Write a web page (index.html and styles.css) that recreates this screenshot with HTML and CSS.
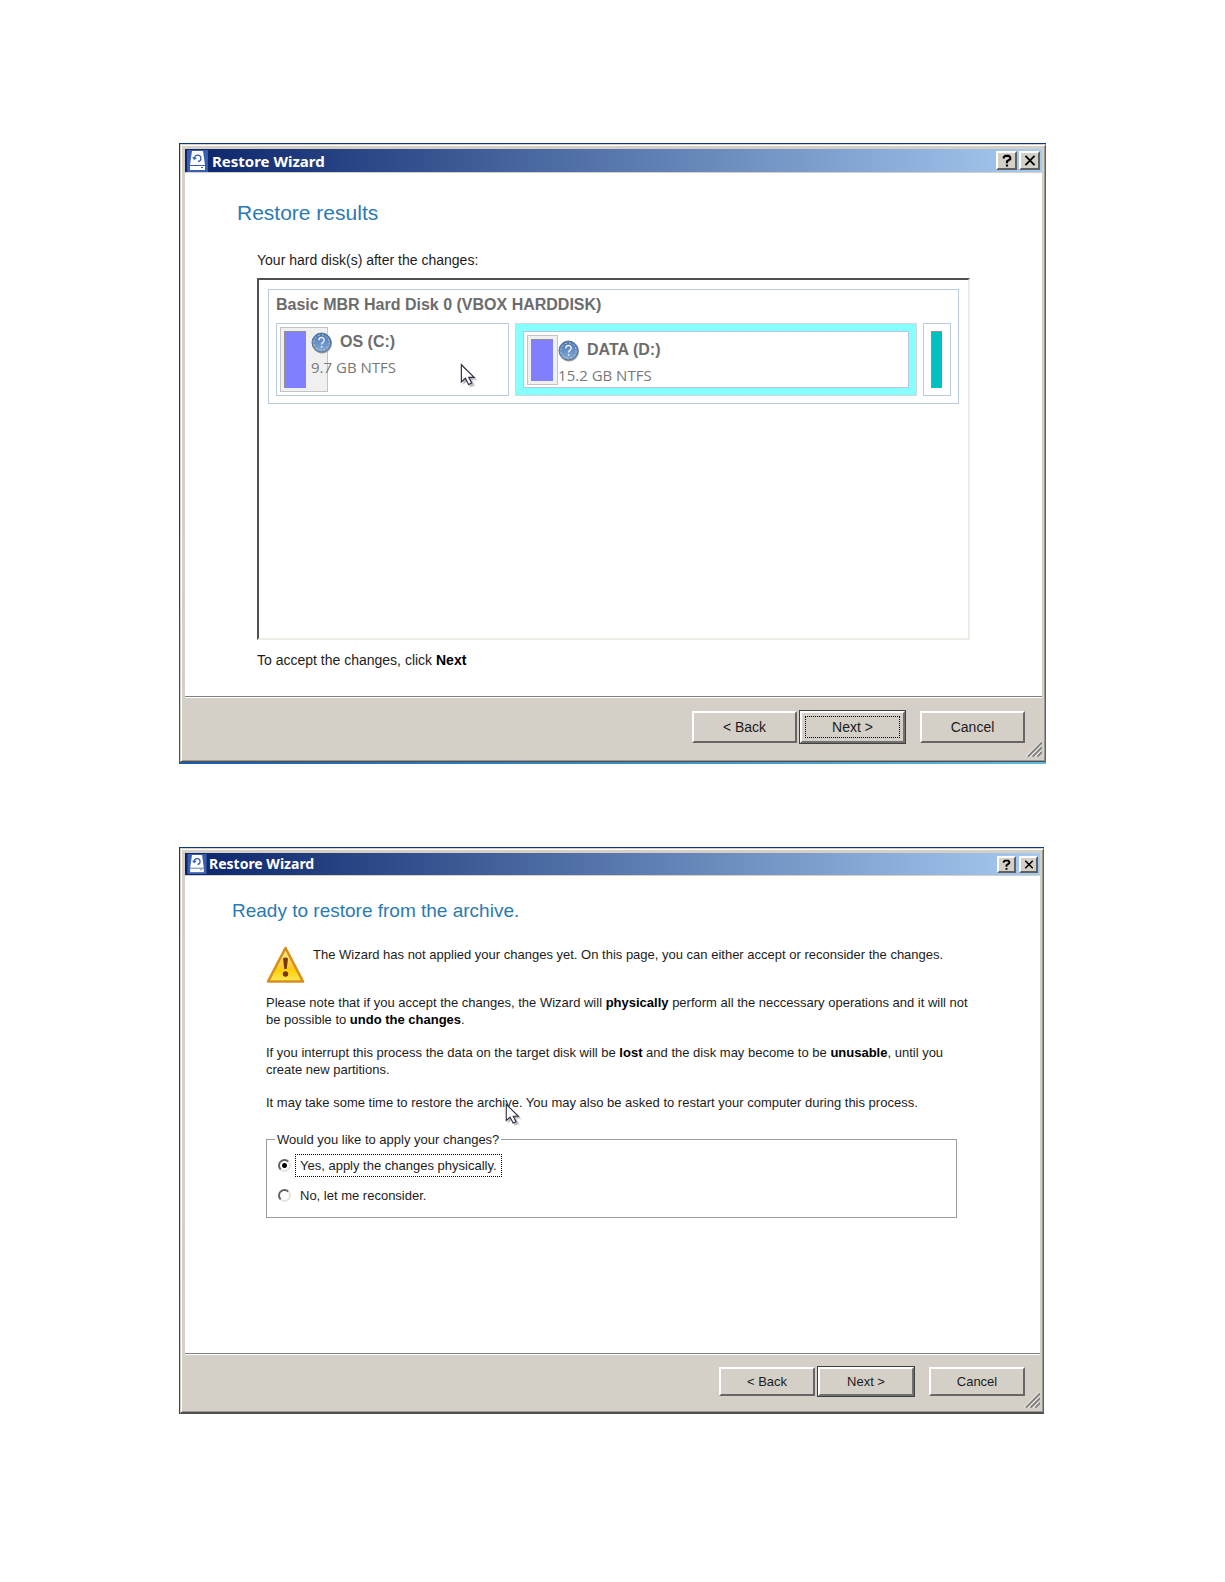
FILE: index.html
```html
<!DOCTYPE html>
<html lang="en">
<head>
<meta charset="utf-8">
<title>Restore Wizard</title>
<link rel="stylesheet" href="styles.css">
</head>
<body>
<svg class="defs" aria-hidden="true">
  <defs>
    <linearGradient id="ball" x1="0" y1="0" x2="0" y2="1"><stop offset="0" stop-color="#4a74b4"/><stop offset="1" stop-color="#86abd8"/></linearGradient>
    <linearGradient id="amber" x1="0" y1="0" x2="0" y2="1"><stop offset="0" stop-color="#fff0a0"/><stop offset=".6" stop-color="#ffc928"/><stop offset=".65" stop-color="#fbd003"/><stop offset="1" stop-color="#ffe85c"/></linearGradient>
  </defs>
  <symbol id="drive" viewBox="0 0 21 22">
    <path fill="#3a5fae" d="M0 0h21v22H0z"/>
    <path fill="#fff" d="M5 1h11l2 14H3z"/>
    <path fill="#fff" d="M3 16h15v4H3z"/>
    <path fill="#3a5fae" d="M14 17h2v1h-2z"/>
    <path fill="none" stroke="#3a5fae" stroke-width="1.3" d="M7.500 8.500a3.200 3.200 0 1 1 3.500 3M5.800 7.200l1.600 2 2-1.400"/>
  </symbol>
  <symbol id="help" viewBox="0 0 22 22">
    <circle cx="11" cy="11.5" r="10" fill="#9c9c9c"/>
    <circle cx="10.5" cy="10.5" r="9.5" fill="url(#ball)" stroke="#5573a0"/>
    <circle cx="10.5" cy="10.5" r="7.6" fill="none" stroke="#b9c9b4" stroke-dasharray="2 2"/>
    <path d="M7.800 8.200c.2-3.600 5.600-3.400 5.400 0-.1 1.900-2.600 2-2.600 4.200M10.600 14v1.800" fill="none" stroke="#e8eef8" stroke-width="1.500"/>
  </symbol>
  <symbol id="pointer" viewBox="0 0 20 28">
    <path fill="#999" opacity=".35" d="M3 3v21l5-4 3 7 6-2-3-6h6z"/>
    <path fill="#999" opacity=".5" d="M4 4v19l4.500-4 3 7 4-2-3-6.500h6z"/>
    <path fill="#fff" stroke="#2d2d44" stroke-width="1.300" d="M1.500 1.500v19l4.500-4 3.500 7 3.500-1.700-3.300-6.300h6z"/>
  </symbol>
  <symbol id="grip" viewBox="0 0 17 17">
    <path fill="none" stroke="#fff" d="M0 16 16 0M5 16 16 5M10 16l6-6"/>
    <path fill="none" stroke="#808080" stroke-width="2" d="M2 16 17 1M7 16 17 6M12 16l5-5"/>
  </symbol>
  <symbol id="question" viewBox="0 0 11 14">
    <path fill="none" stroke="#000" stroke-width="2.400" d="M2 4.800V3.500L3.500 2h4L9 3.500v2L5.500 8v2M5.500 11.300v2.400"/>
  </symbol>
  <symbol id="cross" viewBox="0 0 12 12">
    <path fill="none" stroke="#000" stroke-width="2" d="m1 1 10 10M11 1 1 11"/>
  </symbol>
</svg>

<main class="page">
  <section class="window" aria-label="Restore results">
    <div class="frame">
      <header class="titlebar">
        <svg class="app-icon"><use href="#drive"/></svg>
        <span class="caption">Restore Wizard</span>
        <button class="tool" aria-label="Help"><svg class="q"><use href="#question"/></svg></button>
        <button class="tool" aria-label="Close"><svg class="x"><use href="#cross"/></svg></button>
      </header>
      <div class="body results">
        <h1>Restore results</h1>
        <div class="content">
          <p class="intro">Your hard disk(s) after the changes:</p>
          <div class="disk-list">
            <div class="disk">
              <h2>Basic MBR Hard Disk 0 (VBOX HARDDISK)</h2>
              <div class="partitions">
                <div class="partition part-c">
                  <div class="gauge"><span class="fill"></span></div>
                  <div class="info">
                    <div class="name"><svg class="help"><use href="#help"/></svg><b>OS (C:)</b></div>
                    <div class="size">9.7 GB NTFS</div>
                  </div>
                  <svg class="pointer"><use href="#pointer"/></svg>
                </div>
                <div class="partition part-d">
                  <div class="inner">
                    <div class="gauge"><span class="fill"></span></div>
                    <div class="info">
                      <div class="name"><svg class="help"><use href="#help"/></svg><b>DATA (D:)</b></div>
                      <div class="size">15.2 GB NTFS</div>
                    </div>
                  </div>
                </div>
                <div class="partition part-free"><span class="free"></span></div>
              </div>
            </div>
          </div>
          <p class="hint">To accept the changes, click <strong>Next</strong></p>
        </div>
      </div>
      <footer class="actions">
        <button class="btn">&lt; Back</button>
        <button class="btn default focused"><span>Next &gt;</span></button>
        <button class="btn cancel">Cancel</button>
        <svg class="grip"><use href="#grip"/></svg>
      </footer>
    </div>
  </section>

  <section class="window compact" aria-label="Ready to restore">
    <div class="frame">
      <header class="titlebar">
        <svg class="app-icon"><use href="#drive"/></svg>
        <span class="caption">Restore Wizard</span>
        <button class="tool" aria-label="Help"><svg class="q"><use href="#question"/></svg></button>
        <button class="tool" aria-label="Close"><svg class="x"><use href="#cross"/></svg></button>
      </header>
      <div class="body ready">
        <h1>Ready to restore from the archive.</h1>
        <div class="content">
          <div class="notice">
            <svg class="warning" viewBox="0 0 39 38">
              <path d="M19.500 2 37 35.500H2z" fill="url(#amber)" stroke="#d98e1c" stroke-width="2.600" stroke-linejoin="round"/>
              <path d="M17 12.500q2.500-2 5 0L20.700 23h-2.400z" fill="#7a3606"/>
              <circle cx="19.500" cy="28" r="2.700" fill="#7a3606"/>
            </svg>
            <p>The Wizard has not applied your changes yet. On this page, you can either accept or reconsider the changes.</p>
          </div>
          <p>Please note that if you accept the changes, the Wizard will <strong>physically</strong> perform all the neccessary operations and it will not be possible to <strong>undo the changes</strong>.</p>
          <p>If you interrupt this process the data on the target disk will be <strong>lost</strong> and the disk may become to be <strong>unusable</strong>, until you create new partitions.</p>
          <p class="last">It may take some time to restore the archive. You may also be asked to restart your computer during this process.<svg class="pointer"><use href="#pointer"/></svg></p>
          <fieldset>
            <legend>Would you like to apply your changes?</legend>
            <div class="option"><input type="radio" name="apply" id="apply-yes" checked><label class="focus" for="apply-yes">Yes, apply the changes physically.</label></div>
            <div class="option"><input type="radio" name="apply" id="apply-no"><label for="apply-no">No, let me reconsider.</label></div>
          </fieldset>
        </div>
      </div>
      <footer class="actions">
        <button class="btn">&lt; Back</button>
        <button class="btn default">Next &gt;</button>
        <button class="btn cancel">Cancel</button>
        <svg class="grip"><use href="#grip"/></svg>
      </footer>
    </div>
  </section>
</main>
</body>
</html>
```
FILE: styles.css
```css
* { box-sizing: border-box; }
body { margin: 0; background: #fff; color: #1c1c1c; font: 14px/20px "Liberation Sans", Arial, sans-serif; }
h1, h2, p { margin: 0; }
button { font: inherit; color: inherit; padding: 0; background: #d4d0c8; border-radius: 0; }
svg { display: block; flex: none; }
strong { color: #000; }
.defs { position: absolute; width: 0; height: 0; }

.page { padding: 143px 179px 167px; display: flex; flex-direction: column; gap: 83px; }

/* Window chrome */
.window { padding: 1px 0 2px 1px; background: linear-gradient(90deg, #1c5ba8, #5cbcdc) bottom / 100% 2px no-repeat, linear-gradient(#0a3a82 60%, #1f5fae); }
.frame { border: 1px solid; border-color: #d4d0c8 #606060 #505050 #d4d0c8; background: #d4d0c8; box-shadow: inset 1px 1px #fff, inset -1px -1px #9a9894; padding: 4px 3px 1px 4px; }
.titlebar { height: 24px; display: flex; align-items: center; gap: 2px; padding: 0 2px; border-bottom: 1px solid #d4d0c8; background: linear-gradient(90deg, #0a246a, #a6caf0); }
.caption { flex: 1; padding-left: 2px; color: #fff; font: bold 15px/20px "Noto Sans", sans-serif; }
.app-icon { width: 21px; height: 22px; }
.tool { width: 21px; height: 19px; display: flex; align-items: center; justify-content: center; border: 2px solid; border-color: #fff #606060 #606060 #fff; }
.q { width: 10px; height: 13px; }
.x { width: 12px; height: 11px; }
.body { background: #fff; }
h1 { color: #2a7ab4; font-size: 21px; line-height: 24px; font-weight: normal; }

/* Restore results */
.results { padding: 28px 72px 26px 52px; }
.results .content { padding-left: 20px; }
.intro { margin-top: 25px; margin-bottom: 8px; }
.hint { margin-top: 10px; }
.disk-list { min-height: 362px; border: 2px solid; border-color: #505050 #efece6 #efece6 #505050; padding: 9px 9px 9px 9px; }
.disk { border: 1px solid #b8cbe0; padding: 0 7px 7px; }
h2 { font-size: 16px; line-height: 20px; padding: 5px 0 8px; color: #6c6c6c; }
.partitions { display: flex; gap: 6px; height: 73px; }
.partition { border: 1px solid #b8cbe0; }
.part-c { flex: 235; padding: 3px; display: grid; position: relative; }
.part-d { flex: 403; padding: 7px; background: #88ffff; border-color: #d0d8d8; }
.part-free { flex: none; width: 28px; padding: 7px; }
.free { display: block; height: 100%; width: 11px; background: #00c0c0; border: 1px solid; border-color: #909090 #00c0c0 #00c0c0 #909090; }
.inner { height: 100%; display: grid; background: #fff; border: 1px solid #b8c4e0; padding: 3px; }
.gauge, .info { grid-area: 1 / 1; }
.gauge { width: 48px; background: #f0f0f0; border: 1px solid #c4c4c4; padding: 3px; display: flex; }
.inner .gauge { width: 31px; }
.fill { width: 22px; background: #8080ff; border: 1px solid; border-color: #909090 #8080ff #8080ff #909090; }
.info { padding: 5px 0 0 31px; color: #787878; }
.name { display: flex; align-items: flex-start; gap: 7px; height: 25px; font-size: 16px; color: #6c6c6c; }
.help { width: 22px; height: 22px; }
.size { font: 15px/20px "Open Sans", sans-serif; }
.pointer { position: absolute; width: 18px; height: 26px; }
.part-c .pointer { left: 183px; top: 39px; }

/* Buttons row */
.actions { position: relative; display: flex; align-items: center; justify-content: flex-end; gap: 2px; border-top: 1px solid #808080; box-shadow: inset 0 1px #fff; padding: 13px 17px 16px; }
.btn { width: 105px; height: 32px; border: 2px solid; border-color: #fff #666 #666 #fff; }
.btn.default { width: 107px; height: 34px; border-color: #fff #707070 #707070 #fff; outline: 1px solid #404040; outline-offset: -1px; border-width: 3px; }
.btn.cancel { margin-left: 12px; }
.focused { padding: 2px; }
.focused span { display: block; border: 1px dotted #000; line-height: 20px; margin: 0 1px; }
.grip { position: absolute; right: 0; bottom: 2px; width: 16px; height: 17px; }

/* Confirmation */
.compact { font-size: 13px; line-height: 17px; margin-right: 2px; background: linear-gradient(#0a3a82, #1f4a8a); padding-bottom: 0; }
.compact .frame { border-bottom-width: 2px; }
.compact .titlebar { height: 23px; }
.compact .caption { font-size: 14px; padding: 0; }
.compact .app-icon { width: 20px; height: 20px; }
.compact .tool { width: 19px; height: 17px; margin-left: 1px; }
.compact .q { width: 9px; height: 11px; }
.compact .x { width: 10px; height: 9px; }
.compact h1 { font-size: 19px; }
.ready { padding: 23px 60px 135px 47px; }
.ready .content { padding: 23px 0 0 34px; }
.ready p { margin-bottom: 16px; }
.notice { display: flex; gap: 8px; margin-bottom: 10px; }
.warning { width: 39px; height: 38px; }
.last { position: relative; }
.ready .last { margin-bottom: 20px; }
.last .pointer { left: 239px; top: 9px; width: 17px; height: 24px; }
fieldset { margin: 0 23px 0 0; border: 1px solid #9c9c9c; padding: 6px 10px 10px; }
legend { padding: 0 2px; margin-left: -2px; }
.option { display: flex; align-items: center; gap: 4px; }
.option + .option { margin-top: 7px; }
.option label { border: 1px dotted transparent; padding: 2px 4px; }
.option .focus { border-color: #000; }
input[type="radio"] { appearance: none; width: 13px; height: 13px; margin: 0 0 0 1px; border: 2px solid; border-color: #606060 #e8e4dc #e8e4dc #606060; border-radius: 50%; background: #fff; }
input[type="radio"]:checked { background: radial-gradient(circle, #000 2px, #fff 3px); }
.compact .btn { width: 96px; height: 29px; }
.compact .btn.default { width: 98px; height: 31px; }
.compact .actions { padding: 12px 15px 14px; }
```
